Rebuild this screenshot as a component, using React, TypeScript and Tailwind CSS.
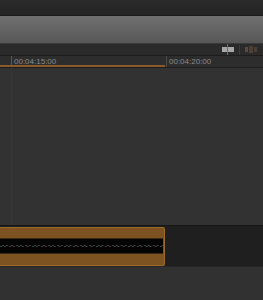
import React from "react";

export default function App() {
  const wave = "ᵕᵔᵕᵔ ᵕᵔᵕ ᵔᵕᵔᵕ ᵔᵕᵔ ᵕᵔᵕᵔ ᵕᵔᵕ ᵔᵕᵔᵕ ᵔᵕᵔ ᵕᵔᵕᵔ ᵕᵔᵕ ᵔᵕᵔᵕ ᵔᵕᵔ ᵕᵔᵕᵔ ᵕᵔᵕ ᵔᵕᵔᵕ ᵔᵕᵔ ᵕᵔᵕᵔ ᵕᵔᵕ ᵔᵕᵔᵕ ᵔᵕᵔ ᵕᵔ";
  return (
    <div className="w-[263px] h-[300px] overflow-hidden flex flex-col bg-[#313131]" style={{ fontFamily: '"Liberation Sans", Arial, sans-serif' }}>
      {/* top dark bar */}
      <div className="h-[16px] shrink-0 bg-gradient-to-b from-[#2b2b2b] to-[#242424] border-b border-[#1a1a1a]" />
      {/* gray gradient bar */}
      <div className="h-[28px] shrink-0 bg-gradient-to-b from-[#707070] to-[#575757] border-b border-[#3a3a3a]" />
      {/* toolbar */}
      <div className="h-[12px] shrink-0 bg-[#2a2a2a] flex items-center justify-end pr-[6px] gap-[5px] border-b border-[#1c1c1c]">
        <div className="relative w-[12px] h-[5px] bg-[#a8a8a8]">
          <div className="absolute left-[5px] top-[-3px] w-[1px] h-[11px] bg-[#7a6a5a]" />
        </div>
        <div className="w-[1px] h-[10px] bg-[#3c3c3c]" />
        <div className="flex items-center gap-[1px]">
          <div className="w-[3px] h-[5px] bg-[#5a4a3c]" />
          <div className="w-[4px] h-[7px] bg-[#4e3f33]" />
          <div className="w-[3px] h-[5px] bg-[#4a3f36]" />
        </div>
      </div>
      {/* ruler */}
      <div className="relative h-[12px] shrink-0 bg-[#2d2d2d]">
        <div className="absolute left-[11px] top-0 w-[1px] h-[11px] bg-[#5a5a5a]" />
        <div className="absolute left-[166px] top-0 w-[1px] h-[11px] bg-[#4a4a4a]" />
        <span className="absolute left-[14px] top-[1px] text-[8px] leading-[9px] text-[#8a8a8a]">00:04:15:00</span>
        <span className="absolute left-[169px] top-[1px] text-[8px] leading-[9px] text-[#8a8a8a]">00:04:20:00</span>
        <div className="absolute left-0 bottom-[1px] w-[165px] h-[2px] bg-[#8a5a28]" />
        <div className="absolute left-0 bottom-0 w-full h-[1px] bg-[#1e1e1e]" />
      </div>
      {/* content */}
      <div className="relative h-[157px] shrink-0 bg-[#323232]">
        <div className="absolute left-[11px] top-0 h-full w-0 border-l border-dotted border-[#3c3c3c]" />
      </div>
      {/* track */}
      <div className="h-[42px] shrink-0 bg-[#1f1f1f] border-t border-[#161616] border-b border-b-[#262626] flex items-center">
        <div className="w-[165px] h-[39px] bg-[#7d5421] rounded-r-[2px] border border-l-0 border-[#9a6a2a] flex flex-col justify-center">
          <div className="h-[16px] bg-[#050505] mr-[1px] border-y border-[#3a2a14] flex items-center overflow-hidden">
            <span className="text-[5px] leading-[5px] text-[#a8a8a8] whitespace-nowrap">{wave}</span>
          </div>
        </div>
      </div>
      <div className="flex-1 bg-[#313131]" />
    </div>
  );
}
